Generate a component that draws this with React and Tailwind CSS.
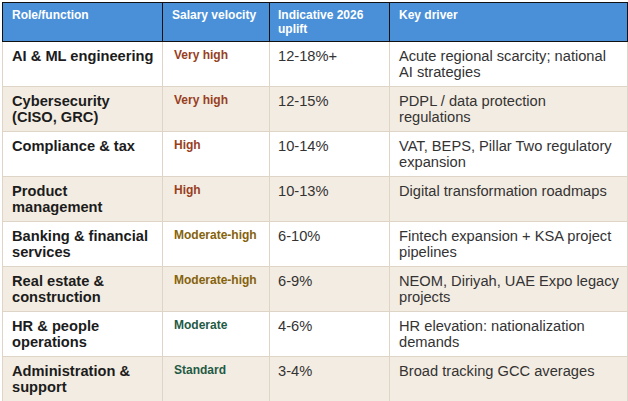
import React from 'react'

const rows = [
  { role: 'AI & ML engineering', vel: 'Very high', tone: 'red', uplift: '12-18%+', driver: 'Acute regional scarcity; national AI strategies' },
  { role: 'Cybersecurity (CISO, GRC)', vel: 'Very high', tone: 'red', uplift: '12-15%', driver: 'PDPL / data protection regulations' },
  { role: 'Compliance & tax', vel: 'High', tone: 'red', uplift: '10-14%', driver: 'VAT, BEPS, Pillar Two regulatory expansion' },
  { role: 'Product management', vel: 'High', tone: 'red', uplift: '10-13%', driver: 'Digital transformation roadmaps' },
  { role: 'Banking & financial services', vel: 'Moderate-high', tone: 'amber', uplift: '6-10%', driver: 'Fintech expansion + KSA project pipelines' },
  { role: 'Real estate & construction', vel: 'Moderate-high', tone: 'amber', uplift: '6-9%', driver: 'NEOM, Diriyah, UAE Expo legacy projects' },
  { role: 'HR & people operations', vel: 'Moderate', tone: 'green', uplift: '4-6%', driver: 'HR elevation: nationalization demands' },
  { role: 'Administration & support', vel: 'Standard', tone: 'green', uplift: '3-4%', driver: 'Broad tracking GCC averages' },
]

const toneClass = {
  red: 'text-[#983f1f]',
  amber: 'text-[#85620c]',
  green: 'text-[#1f5a45]',
}

export default function App() {
  return (
    <div className="bg-white w-[628px] h-[401px] overflow-hidden pl-[2px] pt-[2px]" style={{ fontFamily: '"Liberation Sans", Arial, sans-serif' }}>
      <table className="table-fixed border-collapse w-[625px]">
        <colgroup>
          <col className="w-[160px]" />
          <col className="w-[107px]" />
          <col className="w-[120px]" />
          <col className="w-[238px]" />
        </colgroup>
        <thead>
          <tr className="bg-[#4a90d9] text-white text-[12px] leading-[14px] font-bold">
            <th className="border border-[#111] text-left align-top pl-[9px] pr-2 pt-[5px] pb-[4px] h-[39px]">Role/function</th>
            <th className="border border-[#111] text-left align-top pl-[9px] pr-1 pt-[5px] pb-[4px]">Salary velocity</th>
            <th className="border border-[#111] text-left align-top pl-[8px] pr-1 pt-[5px] pb-[4px]">Indicative 2026 uplift</th>
            <th className="border border-[#111] text-left align-top pl-[9px] pr-2 pt-[5px] pb-[4px]">Key driver</th>
          </tr>
        </thead>
        <tbody>
          {rows.map((r, i) => (
            <tr key={r.role} className={i % 2 ? 'bg-[#f3ece2]' : 'bg-white'}>
              <td className="border border-[#ded5c7] align-top pl-[9px] pr-2 pt-[6px] pb-[6px] h-[45px] text-[14.67px] leading-[16px] font-bold text-[#1c1c1c]">{r.role}</td>
              <td className={'border border-[#ded5c7] align-top pl-[11px] pr-1 pt-[5px] text-[12px] leading-[16px] font-bold ' + toneClass[r.tone]}>{r.vel}</td>
              <td className="border border-[#ded5c7] align-top pl-[8px] pr-1 pt-[6px] text-[14.67px] leading-[16px] text-[#333]">{r.uplift}</td>
              <td className="border border-[#ded5c7] align-top pl-[9px] pr-2 pt-[6px] text-[14.67px] leading-[16px] text-[#333]">{r.driver}</td>
            </tr>
          ))}
        </tbody>
      </table>
    </div>
  )
}
